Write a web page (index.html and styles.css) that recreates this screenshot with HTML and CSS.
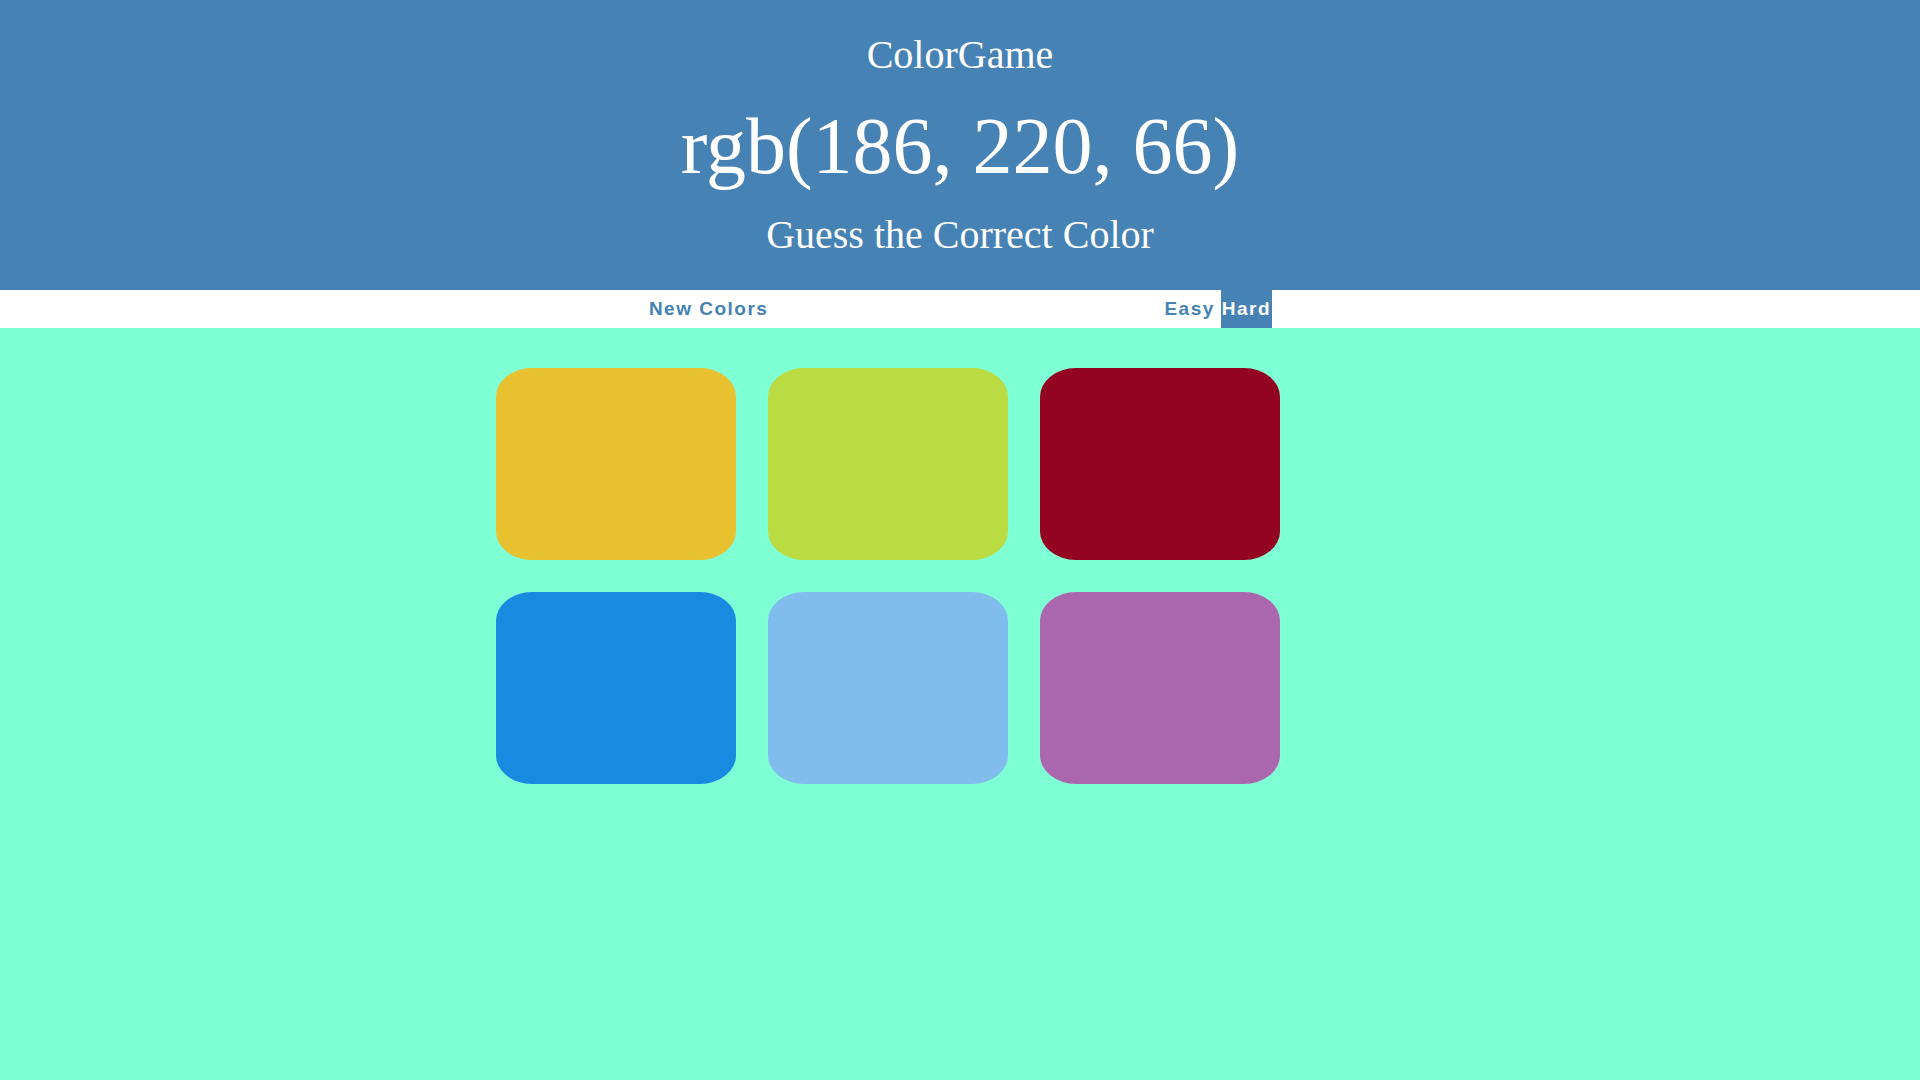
FILE: index.html
```html
<!DOCTYPE html>
<html lang="en">
<head>
<meta charset="utf-8">
<title>Color Game</title>
<link rel="stylesheet" href="styles.css">
</head>
<body>
  <header class="banner">
    <h1 class="title">ColorGame</h1>
    <div class="rgb-display">rgb(186, 220, 66)</div>
    <div class="subtitle">Guess the Correct Color</div>
  </header>
  <nav class="stripe">
    <button class="btn">New Colors</button>
    <span class="message"></span>
    <button class="btn">Easy</button>
    <button class="btn selected">Hard</button>
  </nav>
  <main class="board">
    <div class="square" style="background: rgb(232, 193, 48)"></div>
    <div class="square" style="background: rgb(186, 220, 66)"></div>
    <div class="square" style="background: rgb(147, 3, 34)"></div>
    <div class="square" style="background: rgb(24, 138, 224)"></div>
    <div class="square" style="background: rgb(128, 189, 237)"></div>
    <div class="square" style="background: rgb(171, 103, 174)"></div>
  </main>
</body>
</html>
```
FILE: styles.css
```css
* { box-sizing: border-box; }

html, body {
  margin: 0;
  padding: 0;
}

body {
  background: #7fffd4;
  font-family: "Liberation Serif", "Times New Roman", serif;
  min-height: 1080px;
}

.banner {
  background: #4682b4;
  color: #ffffff;
  text-align: center;
  height: 290px;
  padding-top: 32px;
}

.title {
  margin: 0;
  font-weight: normal;
  font-size: 40px;
  line-height: 46px;
}

.rgb-display {
  margin-top: 22px;
  font-size: 80px;
  line-height: 92px;
}

.subtitle {
  margin-top: 20px;
  font-size: 40px;
  line-height: 46px;
}

.stripe {
  background: #ffffff;
  height: 38px;
  display: flex;
  justify-content: center;
  align-items: stretch;
}

.btn {
  border: none;
  background: none;
  margin: 0;
  padding: 0 1px;
  font-family: "Liberation Sans", Arial, sans-serif;
  font-weight: 700;
  font-size: 19px;
  letter-spacing: 1.5px;
  color: #4682b4;
  cursor: pointer;
  outline: none;
}

.message {
  width: 394px;
}

.btn.selected {
  margin-left: 5px;
  color: #ffffff;
  background: #4682b4;
}

.board {
  width: 960px;
  margin: 24px auto 0;
  padding: 16px;
  display: grid;
  grid-template-columns: repeat(3, 240px);
  column-gap: 32px;
  row-gap: 32px;
  justify-content: start;
}

.square {
  width: 240px;
  height: 192px;
  border-radius: 15%;
}
```
